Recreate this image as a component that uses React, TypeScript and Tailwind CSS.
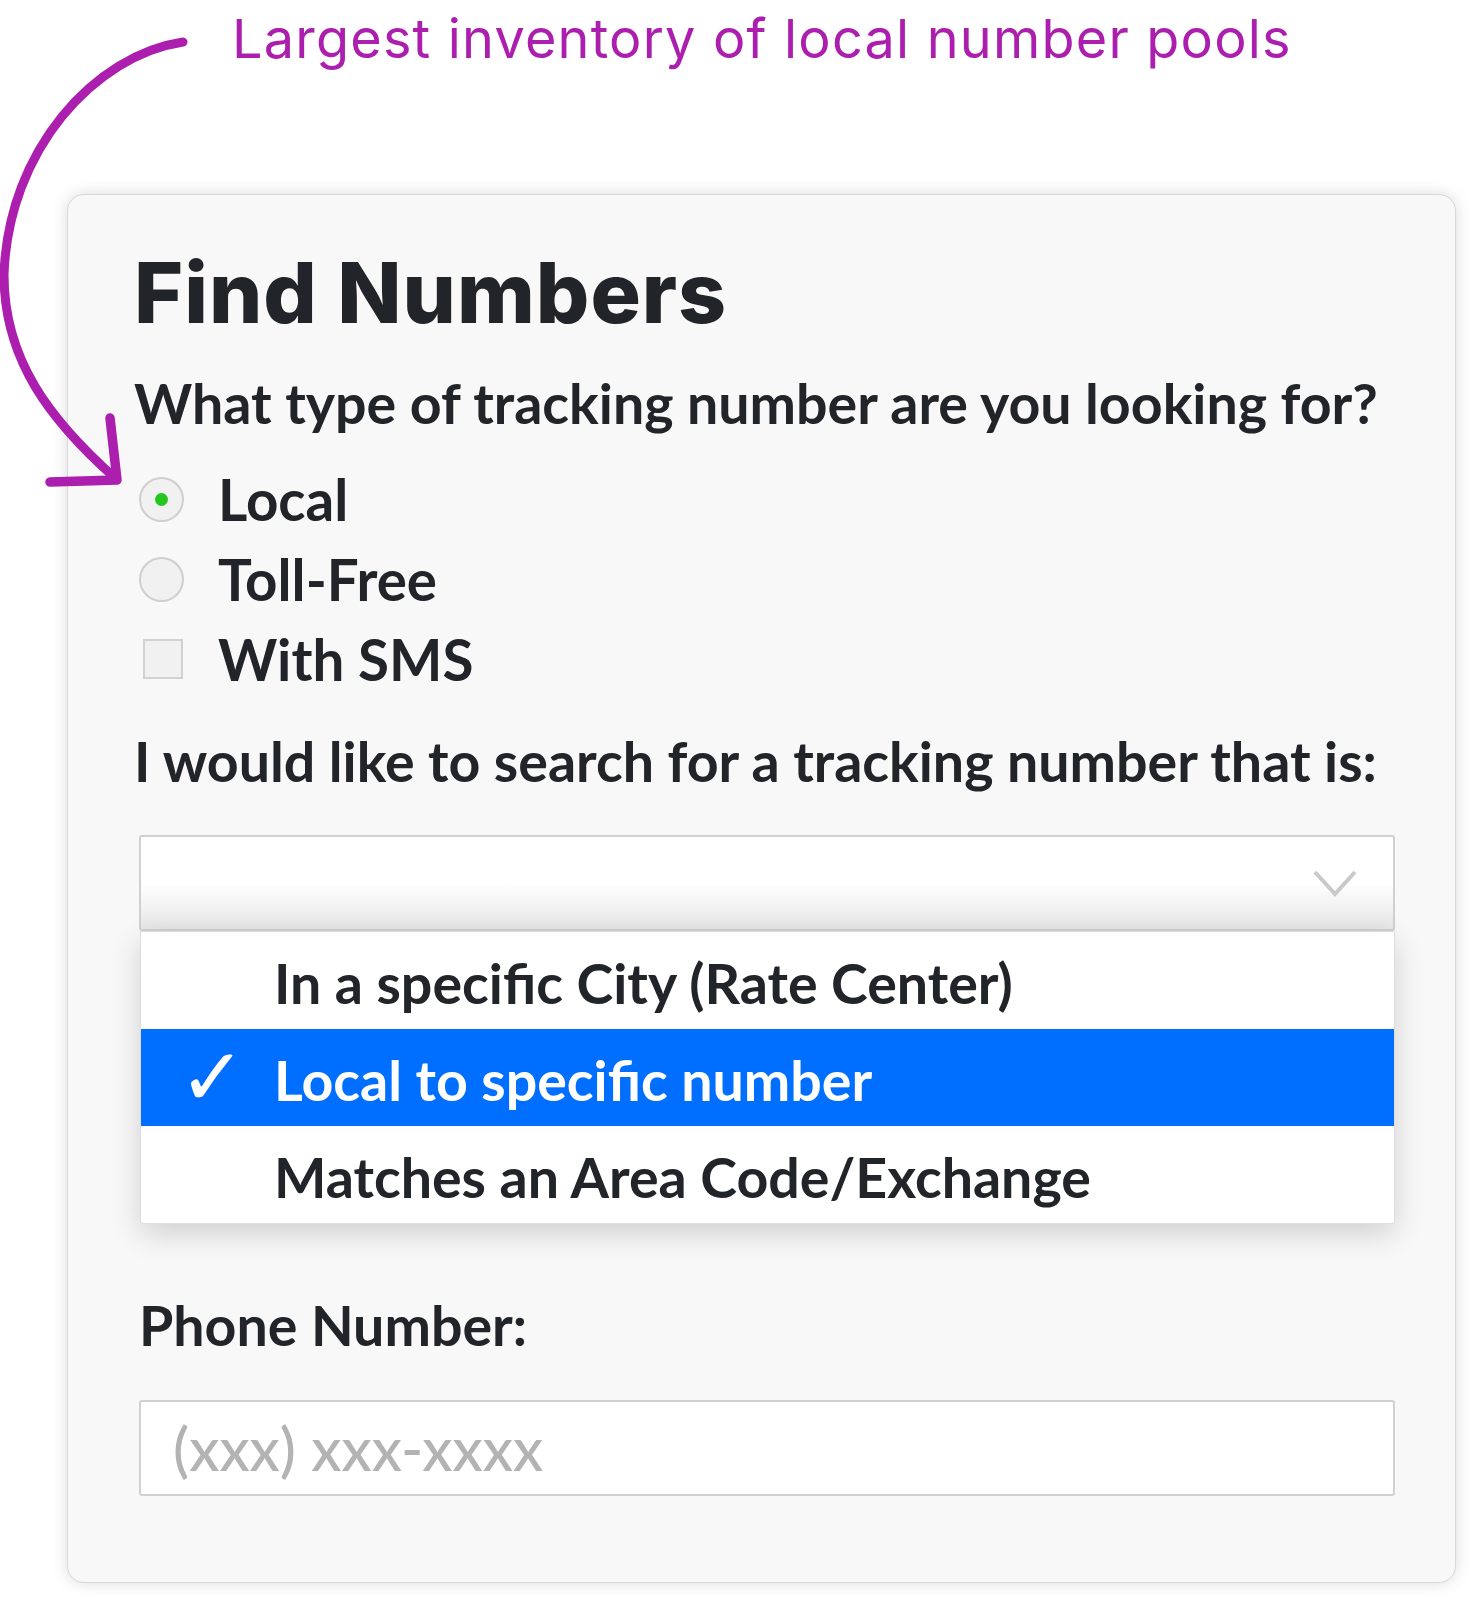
import React from 'react';

const lato = "font-['Lato',_sans-serif]";

const CurvedArrow: React.FC = () => (
  <svg className="absolute left-0 top-0 pointer-events-none" width="260" height="500" viewBox="0 0 260 500" fill="none">
    <path
      d="M183,42 C95,55 8,150 4,275 C4,360 50,420 115,478"
      stroke="#ab1eae"
      strokeWidth="9"
      strokeLinecap="round"
    />
    <path d="M110,418 L117,480 L50,482" stroke="#ab1eae" strokeWidth="9.5" strokeLinecap="round" strokeLinejoin="round" />
  </svg>
);

const OptionRow: React.FC<{ label: string; kind: 'radio' | 'check'; checked?: boolean }> = ({ label, kind, checked }) => (
  <div className="flex h-[80px] items-center">
    <div className="flex w-[45px] items-center justify-center">
      {kind === 'radio' ? (
        <span className="flex h-[45px] w-[45px] items-center justify-center rounded-full border-2 border-[#cfcfcf] bg-[#f1f1f1]">
          {checked && <span className="h-[13px] w-[13px] rounded-full bg-[#22c61c]" />}
        </span>
      ) : (
        <span className="ml-[3px] h-[40px] w-[40px] border-2 border-[#d2d2d2] bg-[#f1f1f1]" />
      )}
    </div>
    <span className={`ml-[34px] text-[56.5px] leading-[67px] font-bold text-[#212529] ${lato}`}>{label}</span>
  </div>
);

const items = ['In a specific City (Rate Center)', 'Local to specific number', 'Matches an Area Code/Exchange'];

export default function App() {
  return (
    <div className="relative h-[1600px] w-[1472px] overflow-hidden bg-white">
      <p className="pl-[232px] pt-[12px] text-[54px] leading-none text-[#ab1eae] font-['Inter',_sans-serif] tracking-[1.2px]">
        Largest inventory of local number pools
      </p>

      <div className="ml-[67px] mt-[128px] h-[1389px] w-[1389px] rounded-[17px] border border-[#d8d8d8] bg-[#f8f8f8] pl-[71px] pr-[60px] pt-[56px] shadow-[0_0_16px_rgba(0,0,0,0.14)]">
        <h1 className="-ml-[5px] text-[84px] leading-none font-extrabold tracking-[1px] text-[#212529] font-['Inter',_sans-serif]">
          Find Numbers
        </h1>

        <p className={`-ml-[5px] mt-[35px] text-[55.5px] leading-[65px] font-bold text-[#212529] ${lato}`}>
          What type of tracking number are you looking for?
        </p>

        <div className="mt-[24px] flex flex-col">
          <OptionRow label="Local" kind="radio" checked />
          <OptionRow label="Toll-Free" kind="radio" />
          <OptionRow label="With SMS" kind="check" />
        </div>

        <p className={`-ml-[5px] mt-[29px] text-[55.5px] leading-[65px] font-bold text-[#212529] ${lato}`}>
          I would like to search for a tracking number that is:
        </p>

        <div className="mt-[42px] flex h-[96px] items-center justify-end rounded-[3px] border-2 border-[#d0d0d0] bg-[linear-gradient(to_bottom,#ffffff_50%,#e6e6e6)] pr-[36px]">
          <svg width="44" height="28" viewBox="0 0 44 28" fill="none">
            <path d="M2,3 L22,25 L42,3" stroke="#c9c9c9" strokeWidth="4" />
          </svg>
        </div>

        <ul className="ml-px w-[1255px] rounded-b-[3px] border border-[#dedede] bg-white shadow-[0_10px_30px_rgba(0,0,0,0.16)]">
          {items.map((item, i) => {
            const active = i === 1;
            return (
              <li
                key={item}
                className={`flex h-[97px] items-center ${active ? 'bg-[#006fff] text-white' : 'text-[#212529]'}`}
              >
                <span className="flex w-[133px] justify-center pl-[10px] text-[80px] leading-none font-['DejaVu_Sans',_sans-serif]">
                  {active ? '✓' : ''}
                </span>
                <span className={`pt-[4px] text-[55.5px] leading-[65px] font-bold ${lato}`}>{item}</span>
              </li>
            );
          })}
        </ul>

        <p className={`mt-[69px] text-[55.5px] leading-[64px] font-bold text-[#212529] ${lato}`}>Phone Number:</p>

        <div className="mt-[43px] flex h-[96px] items-center rounded-[3px] border-2 border-[#d0d0d0] bg-white pl-[32px]">
          <span className={`text-[60px] leading-none font-medium text-[#b3b3b3] ${lato}`}>(xxx) xxx-xxxx</span>
        </div>
      </div>

      <CurvedArrow />
    </div>
  );
}
